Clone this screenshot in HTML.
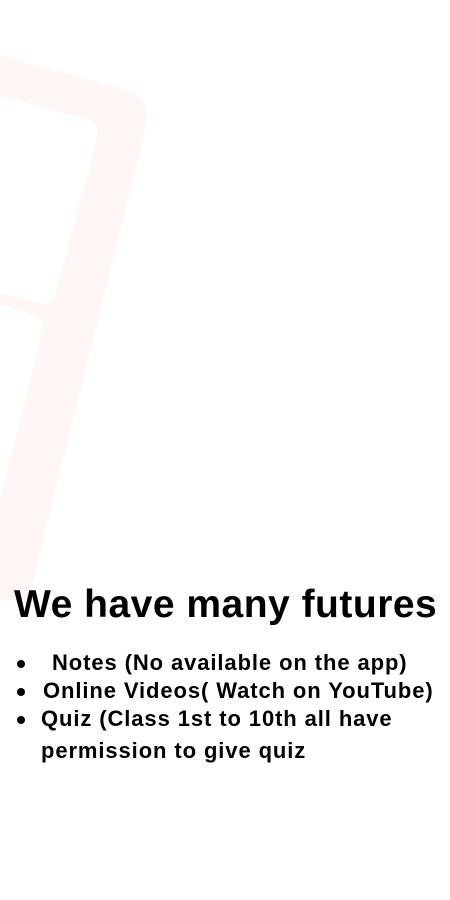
<!DOCTYPE html>
<html><head><meta charset="utf-8"><style>
html,body{margin:0;padding:0;background:#fff;}
body{width:450px;height:900px;position:relative;overflow:hidden;font-family:"Liberation Sans",sans-serif;font-weight:bold;color:#000;}
svg{position:absolute;left:0;top:0;}
.t{position:absolute;white-space:nowrap;}
h1{position:absolute;left:14px;top:583px;margin:0;font-size:39px;letter-spacing:0.5px;}
.b{font-size:22px;letter-spacing:0.9px;}
.dot{position:absolute;width:8px;height:8px;border-radius:50%;background:#000;}
</style></head><body>
<svg width="450" height="900" viewBox="0 0 450 900">
<path fill="#fdf6f4" fill-rule="evenodd" d="M0 55 L132 92 Q150 100 146 125 L28 600 L0 600 Z
M0 96 L90 120 Q100 125 97 140 L55 295 Q50 305 40 303 L0 293 Z
M0 305 L35 315 Q45 320 42 333 L0 500 Z"/>
</svg>
<h1>We have many futures</h1>
<div class="dot" style="left:17px;top:660px"></div>
<div class="t b" style="left:52px;top:650px">Notes (No available on the app)</div>
<div class="dot" style="left:17px;top:688px"></div>
<div class="t b" style="left:43px;top:678px">Online Videos( Watch on YouTube)</div>
<div class="dot" style="left:17px;top:716px"></div>
<div class="t b" style="left:41px;top:706px">Quiz (Class 1st to 10th all have</div>
<div class="t b" style="left:41px;top:738px">permission to give quiz</div>
</body></html>
